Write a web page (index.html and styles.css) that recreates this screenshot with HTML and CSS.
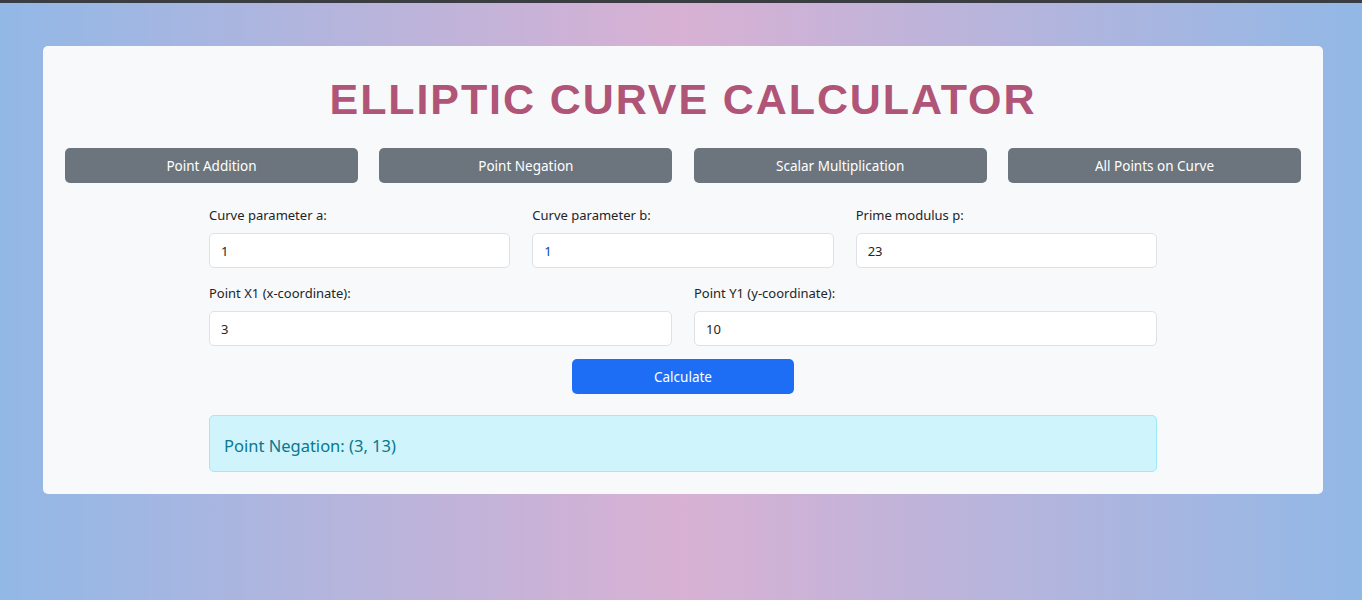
FILE: index.html
```html
<!DOCTYPE html>
<html lang="en">
<head>
<meta charset="utf-8">
<title>Elliptic Curve Calculator</title>
<link rel="stylesheet" href="styles.css">
</head>
<body>
<div class="topbar"></div>
<main class="card">
  <h1 class="title">ELLIPTIC CURVE CALCULATOR</h1>
  <nav class="tabs">
    <button class="tab">Point Addition</button>
    <button class="tab">Point Negation</button>
    <button class="tab">Scalar Multiplication</button>
    <button class="tab">All Points on Curve</button>
  </nav>
  <form class="form">
    <div class="row row-3">
      <div class="field">
        <label class="label">Curve parameter a:</label>
        <input class="input" type="text" value="1">
      </div>
      <div class="field">
        <label class="label">Curve parameter b:</label>
        <input class="input input-blue" type="text" value="1">
      </div>
      <div class="field">
        <label class="label">Prime modulus p:</label>
        <input class="input" type="text" value="23">
      </div>
    </div>
    <div class="row row-2">
      <div class="field">
        <label class="label">Point X1 (x-coordinate):</label>
        <input class="input" type="text" value="3">
      </div>
      <div class="field">
        <label class="label">Point Y1 (y-coordinate):</label>
        <input class="input" type="text" value="10">
      </div>
    </div>
    <div class="actions">
      <button type="button" class="calc">Calculate</button>
    </div>
    <div class="result">Point Negation: (3, 13)</div>
  </form>
</main>
</body>
</html>
```

FILE: styles.css
```css
* { box-sizing: border-box; }
html, body { height: 100%; }
body {
  margin: 0;
  font-family: "Noto Sans", "Open Sans", sans-serif;
  font-size: 13px;
  color: #212529;
  background: linear-gradient(90deg, #92b8e6 0%, #d8b1d3 50%, #92b8e6 100%);
  min-height: 600px;
}
.topbar {
  height: 3px;
  background: #3a3d42;
}
.card {
  width: 1280px;
  margin: 43px 0 0 43px;
  background: #f8f9fa;
  border-radius: 5px;
  padding: 28px 22px 22px;
}
.title {
  margin: 0 0 22px;
  text-align: center;
  font-family: "Liberation Sans", Arial, sans-serif;
  font-weight: 700;
  font-size: 43px;
  line-height: 51.6px;
  letter-spacing: 1.9px;
  color: #b05478;
}
.tabs {
  display: grid;
  grid-template-columns: repeat(4, 1fr);
  gap: 21.3px;
}
.tab {
  height: 35px;
  border: none;
  border-radius: 5px;
  background: #6c757d;
  color: #fff;
  font-family: inherit;
  font-size: 13.5px;
  padding: 2px 0 0;
}
.form {
  width: 948px;
  margin: 22px auto 0;
}
.row {
  display: grid;
  gap: 22px;
  margin-bottom: 15px;
}
.row-3 { grid-template-columns: repeat(3, 1fr); }
.row-2 { grid-template-columns: repeat(2, 1fr); margin-bottom: 13px; }
.field { display: flex; flex-direction: column; }
.label {
  line-height: 20px;
  margin-bottom: 8px;
}
.input {
  height: 35px;
  border: 1px solid #dee2e6;
  border-radius: 5px;
  background: #fff;
  padding: 1px 11px 0;
  font-family: inherit;
  font-size: 13px;
  color: #212529;
}
.input-blue { color: #0d47a1; }
.actions {
  display: flex;
  justify-content: center;
}
.calc {
  width: 222px;
  height: 35px;
  border: none;
  border-radius: 5px;
  background: #1d6ef5;
  color: #fff;
  font-family: inherit;
  font-size: 13.5px;
  padding: 2px 0 0;
}
.result {
  margin-top: 21px;
  height: 57px;
  display: flex;
  align-items: center;
  padding: 4px 14px 0;
  background: #cff4fc;
  border: 1px solid #9eeaf9;
  border-radius: 5px;
  color: #087990;
  font-size: 16.5px;
}
```
